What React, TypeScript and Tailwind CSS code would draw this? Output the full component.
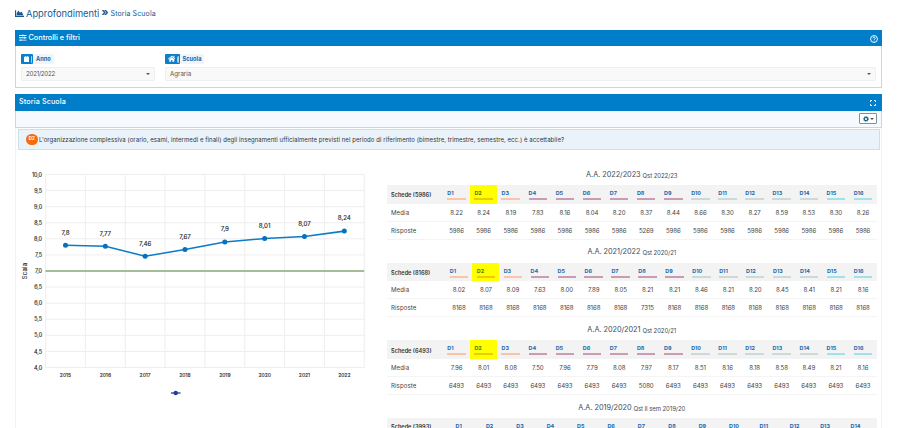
import React from "react";
import { FaChartArea, FaSlidersH, FaHome } from "react-icons/fa";

type Year = {
  year: string;
  qst: string;
  schede: string;
  firstCol: number;
  media: string[];
  risposte: string[];
};

const years: Year[] = [
  {
    year: "A.A. 2022/2023",
    qst: "Qst 2022/23",
    schede: "5986",
    firstCol: 56,
    media: "8.22 8.24 8.19 7.83 8.16 8.04 8.20 8.37 8.44 8.66 8.30 8.27 8.59 8.53 8.30 8.26".split(" "),
    risposte: "5986 5986 5986 5986 5986 5986 5986 5269 5986 5986 5986 5986 5986 5986 5986 5986".split(" "),
  },
  {
    year: "A.A. 2021/2022",
    qst: "Qst 2020/21",
    schede: "8168",
    firstCol: 58.5,
    media: "8.02 8.07 8.09 7.63 8.00 7.89 8.05 8.21 8.21 8.46 8.21 8.20 8.45 8.41 8.21 8.16".split(" "),
    risposte: "8168 8168 8168 8168 8168 8168 8168 7315 8168 8168 8168 8168 8168 8168 8168 8168".split(" "),
  },
  {
    year: "A.A. 2020/2021",
    qst: "Qst 2020/21",
    schede: "6493",
    firstCol: 56,
    media: "7.96 8.01 8.08 7.50 7.96 7.79 8.08 7.97 8.17 8.51 8.16 8.18 8.58 8.49 8.21 8.16".split(" "),
    risposte: "6493 6493 6493 6493 6493 6493 6493 5080 6493 6493 6493 6493 6493 6493 6493 6493".split(" "),
  },
];

function barColor(i: number) {
  if (i === 1) return "bg-[#eccb00]";
  if (i < 3) return "bg-[#fbc4a8]";
  if (i < 9) return "bg-[#cb9ab3]";
  if (i < 14) return "bg-[#cbdad8]";
  return "bg-[#a0e1ea]";
}

function ScoreTable({ data }: { data: Year }) {
  const cols = { gridTemplateColumns: `${data.firstCol}px repeat(16, minmax(0, 1fr))` };
  return (
    <section className="h-[77.7px] shrink-0">
      <h3 className="flex h-[21px] items-center justify-center pt-px text-[7.3px] text-[#3c4b5e]">
        <span className="tracking-[-0.03px]">{data.year}</span>
        <span className="ml-[2px] text-[6px] tracking-[-0.08px]">{data.qst}</span>
      </h3>
      <div className="grid h-[18.7px] bg-[#f3f3f3]" style={cols}>
        <div className="flex items-center pl-[4px] pt-[2px] text-[5.6px] font-semibold whitespace-nowrap text-[#333]">
          Schede ({data.schede})
        </div>
        {data.media.map((_, i) => (
          <div key={i} className={i === 1 ? "bg-[#ffff00] px-[4.3px] pt-[5px]" : "px-[4.3px] pt-[5px]"}>
            <div className={`text-[5.4px] leading-[7px] font-bold ${i === 1 ? "text-[#4d7a18]" : "text-[#1869ad]"}`}>D{i + 1}</div>
            <div className={`mt-px h-[2px] ${barColor(i)}`} />
          </div>
        ))}
      </div>
      {[
        { label: "Media", values: data.media },
        { label: "Risposte", values: data.risposte },
      ].map((row) => (
        <div key={row.label} className="grid h-[18px] items-center border-b border-[#f4f4f4] text-[6.1px] text-[#444]" style={cols}>
          <div className="pl-[4px] tracking-[0.1px]">{row.label}</div>
          {row.values.map((v, i) => (
            <div key={i} className="text-center tracking-[-0.1px]">{v}</div>
          ))}
        </div>
      ))}
    </section>
  );
}

const points = [
  { year: 2015, value: 7.8 },
  { year: 2016, value: 7.77 },
  { year: 2017, value: 7.46 },
  { year: 2018, value: 7.67 },
  { year: 2019, value: 7.9 },
  { year: 2020, value: 8.01 },
  { year: 2021, value: 8.07 },
  { year: 2022, value: 8.24 },
];
const px = (i: number) => 49.5 + i * 39.83;
const py = (v: number) => 217.5 - (v - 4) * 32.17;

function Chart() {
  return (
    <svg width="361" height="278" className="block shrink-0" fontFamily='Inter, "Liberation Sans", sans-serif'>
      {Array.from({ length: 13 }, (_, i) => (
        <g key={i}>
          <line x1="29.5" x2="348.2" y1={217.5 - i * 16.085} y2={217.5 - i * 16.085} stroke="#ececec" strokeWidth="0.9" />
          <text x="26" y={219.6 - i * 16.085} textAnchor="end" fontSize="5.5" letterSpacing="-0.1" fill="#333" stroke="#333" strokeWidth="0.15">
            {(4 + i / 2).toFixed(1).replace(".", ",")}
          </text>
        </g>
      ))}
      {Array.from({ length: 9 }, (_, i) => (
        <line key={i} x1={29.6 + i * 39.83} x2={29.6 + i * 39.83} y1="24.5" y2="217.5" stroke="#f0f0f0" strokeWidth="1.2" />
      ))}
      <line x1="29.5" x2="348.2" y1="121" y2="121" stroke="#86aa78" strokeWidth="1.6" />
      <polyline points={points.map((p, i) => `${px(i)},${py(p.value)}`).join(" ")} fill="none" stroke="#0b7cc6" strokeWidth="1.6" />
      {points.map((p, i) => (
        <g key={p.year}>
          <circle cx={px(i)} cy={py(p.value)} r="2.5" fill="#0870bd" />
          <text x={px(i)} y={py(p.value) - 10.6} textAnchor="middle" fontSize="6.2" fill="#222" stroke="#222" strokeWidth="0.12">
            {String(p.value).replace(".", ",")}
          </text>
          <text x={px(i)} y="227" textAnchor="middle" fontSize="5" fill="#333" stroke="#333" strokeWidth="0.15">
            {p.year}
          </text>
        </g>
      ))}
      <text transform="translate(11.3 121) rotate(-90)" textAnchor="middle" fontSize="6" letterSpacing="0.2" fill="#333" stroke="#333" strokeWidth="0.12">
        Scala
      </text>
      <line x1="155" x2="164.5" y1="243" y2="243" stroke="#1b3fa0" strokeWidth="1.3" />
      <circle cx="159.7" cy="243" r="2.2" fill="#1b3fa0" />
    </svg>
  );
}

function Tag({ icon, children }: { icon: React.ReactNode; children: React.ReactNode }) {
  return (
    <div className="flex h-[10px] w-fit items-center rounded-[1px] bg-[#eef6fc]">
      <span className="flex h-[10px] items-center rounded-[1px] bg-[#0b7fcb] pr-px pl-[2.5px] text-white">
        {icon}
        <span className="ml-[2px] h-[7px] w-[1.5px] shrink-0 rounded-l-full bg-[#a9d2ee]" />
      </span>
      <span className="px-[3px] text-[5.6px] font-bold tracking-[0.05px] text-[#1467a8]">{children}</span>
    </div>
  );
}

function Select({ children }: { children: React.ReactNode }) {
  return (
    <div className="mt-[3px] flex h-[14px] items-center justify-between rounded-[1px] border border-[#eeeff1] bg-[#f9f9f9] pr-[4px] pl-[4px] text-[6.2px] text-[#555]">
      {children}
      <Caret />
    </div>
  );
}

function Caret() {
  return <span className="border-x-2 border-t-2 border-x-transparent border-t-[#555]" />;
}

export default function App() {
  return (
    <div className="h-[428px] w-[900px] overflow-hidden bg-white pl-[15px] font-['Inter','Liberation_Sans',sans-serif]">
      <h1 className="flex h-[30px] items-center text-[#175993]">
        <FaChartArea className="mt-[-4px] text-[9px]" />
        <span className="mt-[-3px] ml-[2px] text-[9.3px]">Approfondimenti</span>
        <span className="mt-[-5px] ml-[2px] text-[11px] font-bold">»</span>
        <span className="mt-[-2px] ml-[2px] text-[7px] tracking-[0.12px]">Storia Scuola</span>
      </h1>

      <section className="h-[58px] w-[867px] border-x border-b border-[#bdd9ec]">
        <header className="-mx-px flex h-[16px] items-center justify-between bg-[#007ec9] pr-[4px] pl-[4px] text-white">
          <span className="flex items-center text-[7.3px] font-medium">
            <FaSlidersH className="mr-[2px] text-[7.5px]" />
            Controlli e filtri
          </span>
          <svg width="8" height="8" viewBox="0 0 16 16" className="mt-px" fill="none" stroke="white" strokeWidth="1.9">
            <circle cx="8" cy="8" r="6.9" />
            <path d="M5.7 6.5a2.3 2.3 0 1 1 3.5 2C8.3 9 8 9.3 8 10.2M8 11.3v1.5" />
          </svg>
        </header>
        <div className="flex gap-[10px] pt-[8px] pl-[5px]">
          <div className="w-[134px]">
            <Tag
              icon={
                <svg width="5" height="6" viewBox="0 0 10 12" fill="white" className="shrink-0">
                  <path d="M2 0h1.5v1.5h3V0H8v1.5h2V12H0V1.5h2z" />
                </svg>
              }
            >
              Anno
            </Tag>
            <Select>
              <span className="tracking-[-0.27px]">2021/2022</span>
            </Select>
          </div>
          <div className="w-[711px]">
            <Tag icon={<FaHome className="shrink-0 text-[7.5px]" />}>Scuola</Tag>
            <Select>
              <span>Agraria</span>
            </Select>
          </div>
        </div>
      </section>

      <section className="mt-[6px] w-[867px] border-x border-[#f0f3f5]">
        <header className="-mx-px flex h-[17px] items-center justify-between bg-[#007ec9] pr-[6px] pl-[4px] text-white">
          <span className="text-[7.2px] font-medium tracking-[0.12px]">Storia Scuola</span>
          <svg width="6" height="6" viewBox="0 0 12 12" fill="none" stroke="white" strokeWidth="1.8">
            <path d="M1 4V1h3M8 1h3v3M11 8v3H8M4 11H1V8" />
          </svg>
        </header>
        <div className="-mx-px flex h-[16.5px] items-center justify-end border-x border-b border-[#bdd9ec] bg-[#f6fafe] pr-[4px]">
          <div className="flex h-[11px] w-[18px] items-center justify-between rounded-[1px] border border-[#7d9299] bg-white pr-[2.5px] pl-[3px]">
            <svg width="6" height="6" viewBox="0 0 12 12" fill="none" stroke="#1e6173">
              <circle cx="6" cy="6" r="3.4" strokeWidth="2.4" />
              <circle cx="6" cy="6" r="5" strokeWidth="1.6" strokeDasharray="2 1.93" />
            </svg>
            <Caret />
          </div>
        </div>
        <div className="mt-[1.5px] ml-[2px] flex h-[21px] w-[862px] items-center border border-[#cbdfef] bg-[#eaf2fa] pl-[7px] text-[6px] text-[#333]">
          <span className="flex size-[11.5px] items-center justify-center rounded-full bg-[#f76b0c] text-[4.5px] font-bold text-white">D2</span>
          <span className="ml-[1.5px] tracking-[0.068px] whitespace-nowrap">
            L'organizzazione complessiva (orario, esami, intermedi e finali) degli insegnamenti ufficialmente previsti nel periodo di riferimento (bimestre, trimestre, semestre, ecc.) è accettabile?
          </span>
        </div>
        <div className="flex h-[278px]">
          <Chart />
          <div className="ml-[10px] flex w-[489.5px] shrink-0 flex-col pt-[14px]">
            {years.map((y) => (
              <ScoreTable key={y.year} data={y} />
            ))}
            <section>
              <h3 className="flex h-[21px] items-center justify-center pt-px text-[7.3px] text-[#3c4b5e]">
                <span className="tracking-[-0.03px]">A.A. 2019/2020</span>
                <span className="ml-[2px] text-[6px] tracking-[-0.08px]">Qst II sem 2019/20</span>
              </h3>
              <div className="grid h-[18px] grid-cols-[64px_repeat(14,minmax(0,1fr))] bg-[#f3f3f3]">
                <div className="flex items-center pl-[4px] pt-px text-[5.6px] font-semibold whitespace-nowrap text-[#333]">Schede (3993)</div>
                {Array.from({ length: 14 }, (_, i) => (
                  <div key={i} className="pt-[5px] pl-[4.5px] text-[5.4px] leading-[7px] font-bold text-[#1869ad]">D{i + 1}</div>
                ))}
              </div>
            </section>
          </div>
        </div>
      </section>
    </div>
  );
}
